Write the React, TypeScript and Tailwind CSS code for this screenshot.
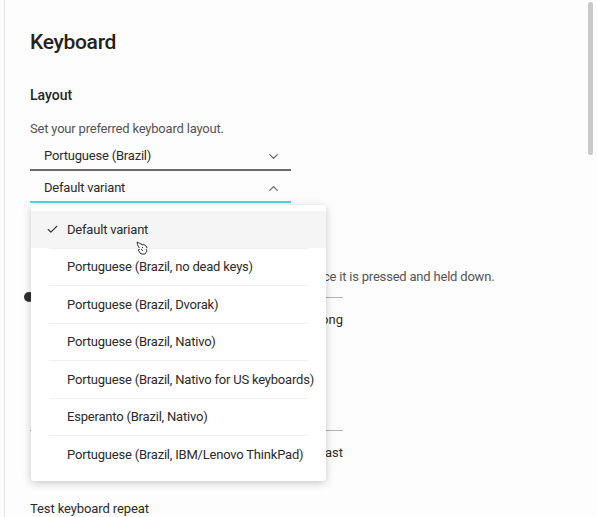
import React from 'react';
import { Check, ChevronDown, ChevronUp } from 'lucide-react';

const variants = [
  'Default variant',
  'Portuguese (Brazil, no dead keys)',
  'Portuguese (Brazil, Dvorak)',
  'Portuguese (Brazil, Nativo)',
  'Portuguese (Brazil, Nativo for US keyboards)',
  'Esperanto (Brazil, Nativo)',
  'Portuguese (Brazil, IBM/Lenovo ThinkPad)',
];

const Slider = ({ knob }: { knob: number }) => (
  <div className="relative h-[12px] w-[313px] flex items-center">
    <div className="h-[1px] w-full bg-[#b4b4b4]" />
    <div
      className="absolute top-[1px] h-[10px] w-[10px] rounded-full bg-[#2e2e2e]"
      style={{ left: knob }}
    />
  </div>
);

// little hand cursor left over from the capture
const HandCursor = () => (
  <svg width="14" height="16" viewBox="0 0 14 16" fill="none" stroke="#333" strokeWidth="1" strokeLinejoin="round">
    <path d="M2 2 L8 5 L9 4.5 L12 7 L11 9 L12 11 L10 14 L6 14 L3 10 L5 9 L3 6 Z" fill="#fff" />
    <path d="M6 9 L8 11 M7 7 L9 9" />
  </svg>
);

export default function App() {
  return (
    <div
      className="relative h-[517px] w-[597px] overflow-hidden bg-[#fdfdfd] text-[#2b2b2b]"
      style={{ fontFamily: 'Roboto, "Liberation Sans", sans-serif' }}
    >
      <div className="ml-[4px] h-full border-l border-[#e6e6e6] pl-[25px] pt-[28px]">
        <h1 className="text-[21px] leading-[28px] font-medium tracking-[-0.3px] text-[#222]">Keyboard</h1>

        {/* Layout */}
        <h2 className="mt-[29px] text-[14px] leading-[20px] font-medium text-[#262626]">Layout</h2>
        <p className="mt-[15px] text-[13px] leading-[18px] text-[#555] tracking-[-0.2px]">
          Set your preferred keyboard layout.
        </p>

        <div className="mt-[1px] w-[261px]">
          <div className="flex h-[32px] items-center justify-between border-b-2 border-[#6b6b6b] pl-[14px] pr-[10px] pt-[4px] text-[13px] tracking-[-0.2px] text-[#2b2b2b]">
            <span>Portuguese (Brazil)</span>
            <ChevronDown className="h-[15px] w-[15px] text-[#666]" strokeWidth={2} />
          </div>
          <div className="relative">
            <div className="flex h-[32px] items-center justify-between border-b-2 border-[#59d2dc] pl-[14px] pr-[10px] pt-[4px] text-[13px] tracking-[-0.2px] text-[#2b2b2b]">
              <span>Default variant</span>
              <ChevronUp className="h-[15px] w-[15px] text-[#666]" strokeWidth={2} />
            </div>

            {/* open variant menu */}
            <div className="absolute left-[1px] top-[calc(100%+2px)] z-10 w-[295px] rounded-[3px] bg-white pb-[8px] pt-[6px] shadow-[0_2px_9px_rgba(0,0,0,0.22)]">
              {variants.map((v, i) => (
                <div key={v} className={i === 0 ? 'relative bg-[#f5f5f5]' : 'relative'}>
                  {i > 0 && <div className="mx-[18px] h-[1px] bg-[#efefef]" />}
                  <div className="flex h-[36.5px] items-center text-[13px] tracking-[-0.2px] text-[#2b2b2b]">
                    <div className="flex w-[36px] justify-end pr-[8px]">
                      {i === 0 && <Check className="h-[13px] w-[13px] text-[#333]" strokeWidth={2} />}
                    </div>
                    <span>{v}</span>
                  </div>
                  {i === 0 && (
                    <div className="absolute left-[104px] top-[29px]">
                      <HandCursor />
                    </div>
                  )}
                </div>
              ))}
            </div>
          </div>
        </div>

        {/* Repeat keys (mostly behind the menu) */}
        <h2 className="mt-[32px] pl-[4px] text-[14px] leading-[20px] font-medium text-[#262626]">Repeat Keys</h2>
        <p className="mt-[13px] pl-[6px] text-[13px] leading-[18px] text-[#555] tracking-[-0.2px]">
          Key presses repeat when a key is held: it is typed once it is pressed and held down.
        </p>
        <div className="mt-[5px]">
          <Slider knob={-6} />
        </div>
        <div className="mt-[8px] flex w-[313px] justify-between pl-[4px] text-[13px] leading-[18px] text-[#2b2b2b]">
          <span>Short</span>
          <span>Long</span>
        </div>

        <h3 className="mt-[56px] pl-[4px] text-[13px] leading-[20px] text-[#2b2b2b]">Speed</h3>
        <div className="mt-[19px]">
          <Slider knob={2} />
        </div>
        <div className="mt-[8px] flex w-[313px] justify-between pl-[4px] text-[13px] leading-[18px] text-[#2b2b2b]">
          <span>Slow</span>
          <span>Fast</span>
        </div>

        <p className="mt-[37px] text-[13px] leading-[20px] text-[#2b2b2b] tracking-[-0.1px]">Test keyboard repeat</p>
      </div>

      {/* scrollbar thumb */}
      <div className="absolute right-[4px] top-[2px] h-[153px] w-[5px] rounded-full bg-[#c9c9c9]" />
    </div>
  );
}
